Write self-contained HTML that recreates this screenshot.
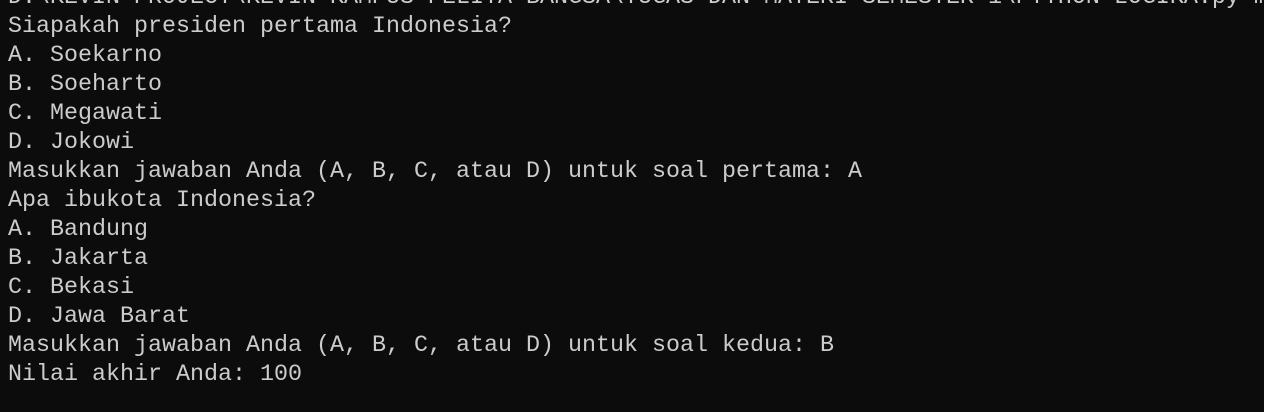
<!DOCTYPE html>
<html><head><style>
html,body{margin:0;padding:0;background:#0c0c0c;width:1264px;height:412px;overflow:hidden}
pre{position:absolute;left:8px;top:-16px;margin:0;font-family:"Liberation Mono",monospace;font-size:23.33px;line-height:29px;color:#cccccc;white-space:pre}
</style></head><body>
<pre>D:\KEVIN PROJECT\KEVIN KAMPUS PELITA BANGSA\TUGAS DAN MATERI SEMESTER 1\PYTHON LOGIKA.py m
Siapakah presiden pertama Indonesia?
A. Soekarno
B. Soeharto
C. Megawati
D. Jokowi
Masukkan jawaban Anda (A, B, C, atau D) untuk soal pertama: A
Apa ibukota Indonesia?
A. Bandung
B. Jakarta
C. Bekasi
D. Jawa Barat
Masukkan jawaban Anda (A, B, C, atau D) untuk soal kedua: B
Nilai akhir Anda: 100</pre>
</body></html>
